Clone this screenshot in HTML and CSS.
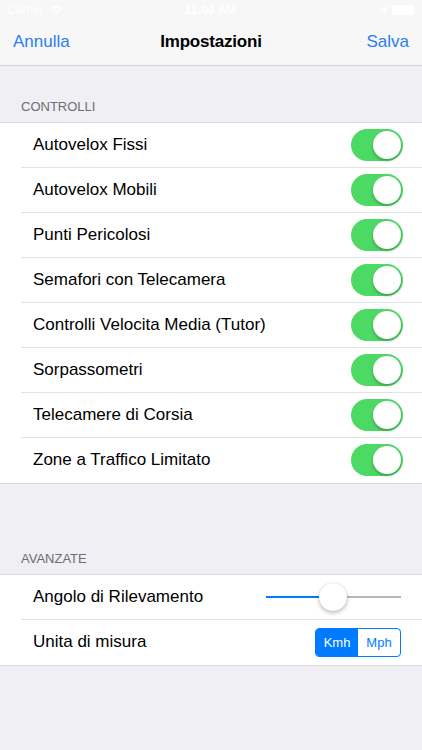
FILE: index.html
```html
<!DOCTYPE html>
<html lang="it">
<head>
    <meta charset="UTF-8">
    <meta name="viewport" content="width=device-width, initial-scale=1.0">
    <title>Impostazioni</title>
    <link rel="stylesheet" href="styles.css">
</head>
<body>
    <div class="screen">
        <div class="topbar">
            <div class="status">
                <div class="status-left">
                    <span>Carrier</span>
                    <svg class="wifi" width="13" height="10" viewBox="0 0 13 10">
                        <path d="M6.5 10 L4.4 7.6 A3 3 0 0 1 8.6 7.6 Z" fill="#fff"/>
                        <path d="M2.9 5.9 A5.2 5.2 0 0 1 10.1 5.9" stroke="#fff" stroke-width="1.5" fill="none"/>
                        <path d="M1 3.9 A7.8 7.8 0 0 1 12 3.9" stroke="#fff" stroke-width="1.5" fill="none"/>
                    </svg>
                </div>
                <span class="status-time">11:00 AM</span>
                <div class="status-right">
                    <svg width="8" height="8" viewBox="0 0 8 8">
                        <path d="M8 0 L0 3.4 L3.8 4.2 L4.6 8 Z" fill="#fff"/>
                    </svg>
                    <span class="battery"></span>
                </div>
            </div>
            <div class="navbar">
                <a class="nav-btn" href="#">Annulla</a>
                <span class="nav-title">Impostazioni</span>
                <a class="nav-btn right" href="#">Salva</a>
            </div>
        </div>

        <div class="section-title first">CONTROLLI</div>
        <div class="group">
            <div class="row"><span>Autovelox Fissi</span><span class="switch"></span></div>
            <div class="row"><span>Autovelox Mobili</span><span class="switch"></span></div>
            <div class="row"><span>Punti Pericolosi</span><span class="switch"></span></div>
            <div class="row"><span>Semafori con Telecamera</span><span class="switch"></span></div>
            <div class="row"><span>Controlli Velocita Media (Tutor)</span><span class="switch"></span></div>
            <div class="row"><span>Sorpassometri</span><span class="switch"></span></div>
            <div class="row"><span>Telecamere di Corsia</span><span class="switch"></span></div>
            <div class="row"><span>Zone a Traffico Limitato</span><span class="switch"></span></div>
        </div>

        <div class="section-title second">AVANZATE</div>
        <div class="group">
            <div class="row">
                <span>Angolo di Rilevamento</span>
                <div class="slider">
                    <div class="slider-fill" style="width: 49.5%"></div>
                    <div class="slider-rest"></div>
                    <span class="slider-thumb" style="left: 49.5%"></span>
                </div>
            </div>
            <div class="row">
                <span>Unita di misura</span>
                <div class="segmented">
                    <span class="segment active">Kmh</span>
                    <span class="segment">Mph</span>
                </div>
            </div>
        </div>
    </div>
</body>
</html>
```

FILE: styles.css
```css
* {
    margin: 0;
    padding: 0;
    box-sizing: border-box;
}

body {
    font-family: 'Liberation Sans', Arial, sans-serif;
    background: #efeff4;
    color: #000;
}

.screen {
    width: 422px;
    min-height: 750px;
    background: #efeff4;
}

.topbar {
    background: #f7f7f8;
    border-bottom: 1px solid #d4d4d8;
}

.status {
    height: 20px;
    display: flex;
    align-items: center;
    justify-content: space-between;
    padding: 0 8px 0 7px;
    color: #fff;
    font-size: 12px;
}

.status-left {
    display: flex;
    align-items: center;
    gap: 6px;
    width: 120px;
}

.status-time {
    font-weight: bold;
}

.status-right {
    display: flex;
    align-items: center;
    justify-content: flex-end;
    gap: 4px;
    width: 120px;
}

.battery {
    width: 22px;
    height: 10px;
    background: #fff;
    border-radius: 2px;
}

.navbar {
    height: 45px;
    display: grid;
    grid-template-columns: 1fr auto 1fr;
    align-items: center;
    padding: 0 13px 1px 13px;
    font-size: 17px;
}

.nav-btn {
    color: #2a7ef0;
    text-decoration: none;
}

.nav-btn.right {
    justify-self: end;
}

.nav-title {
    font-weight: bold;
    letter-spacing: -0.2px;
}

.section-title {
    font-size: 13px;
    color: #6d6d72;
    padding: 0 21px 8px;
}

.section-title.first {
    padding-top: 33px;
}

.section-title.second {
    padding-top: 67px;
}

.group {
    background: #fff;
    border-top: 1px solid #dcdce0;
    border-bottom: 1px solid #dcdce0;
}

.row {
    height: 45px;
    margin-left: 21px;
    padding: 0 19px 1px 12px;
    display: flex;
    align-items: center;
    justify-content: space-between;
    font-size: 17px;
    border-bottom: 1px solid #e2e2e6;
}

.row:last-child {
    border-bottom: none;
}

.switch {
    position: relative;
    width: 52px;
    height: 32px;
    border-radius: 16px;
    background: #4cd964;
}

.switch::after {
    content: '';
    position: absolute;
    top: 2px;
    right: 2px;
    width: 28px;
    height: 28px;
    border-radius: 50%;
    background: #fff;
    box-shadow: 0 2px 3px rgba(0, 0, 0, 0.25);
}

.slider {
    position: relative;
    width: 135px;
    height: 28px;
    margin-right: 2px;
    display: flex;
    align-items: center;
}

.slider-fill {
    height: 2px;
    background: #007aff;
}

.slider-rest {
    flex: 1;
    height: 2px;
    background: #b7b7b7;
}

.slider-thumb {
    position: absolute;
    top: 0;
    width: 28px;
    height: 28px;
    margin-left: -14px;
    border-radius: 50%;
    background: #fff;
    box-shadow: 0 2px 4px rgba(0, 0, 0, 0.25), 0 0 1px rgba(0, 0, 0, 0.2);
}

.segmented {
    display: flex;
    width: 86px;
    height: 29px;
    border: 1px solid #007aff;
    border-radius: 4px;
    overflow: hidden;
    font-size: 13px;
    margin-right: 2px;
}

.segment {
    flex: 1;
    display: flex;
    align-items: center;
    justify-content: center;
    color: #007aff;
}

.segment.active {
    background: #007aff;
    color: #fff;
}
```
